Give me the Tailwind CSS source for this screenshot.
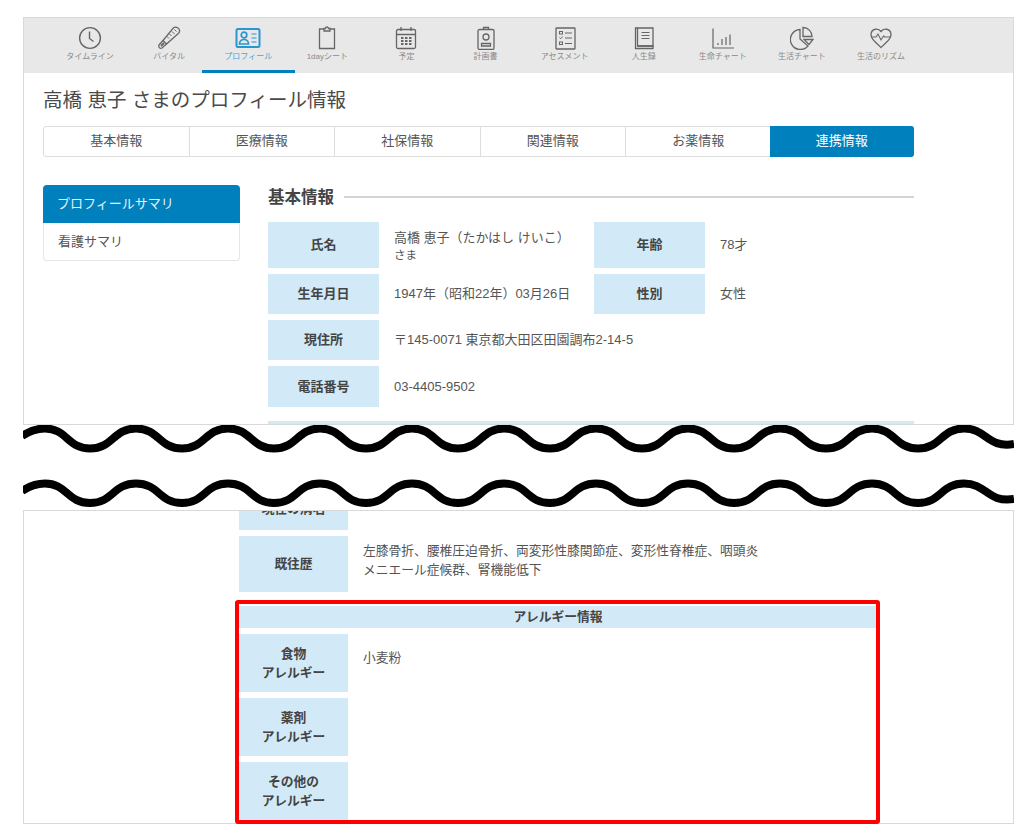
<!DOCTYPE html>
<html lang="ja"><head><meta charset="utf-8">
<script src="https://cdn.jsdelivr.net/npm/@tailwindcss/browser@4"></script>
</head>
<body class="bg-white font-['Liberation_Sans','Noto_Sans_CJK_JP',sans-serif] text-[#555]">
<div class="w-[1024px] h-[831px] overflow-hidden pt-[17px] pl-[23px]">
  <!-- top panel -->
  <section class="w-[991px] h-[408px] border border-[#d9d9d9] overflow-hidden">
    <nav class="h-[55px] bg-[#e8e8e8] flex pl-[26.5px] text-[8px] text-[#888]">
      <div class="w-[79.1px] flex flex-col items-center pt-[8px]">
        <svg class="w-[24px] h-[24px]" viewBox="0 0 24 24" fill="none" stroke="#666" stroke-width="1.4"><circle cx="12" cy="12" r="10.4"/><path d="M11.5 5.5v7l4 3" /></svg>
        <span class="mt-[1px] leading-[11px]">タイムライン</span></div>
      <div class="w-[79.1px] flex flex-col items-center pt-[8px]">
        <svg class="w-[24px] h-[24px]" viewBox="0 0 24 24" fill="none" stroke="#666" stroke-width="1.300"><path d="M16.500 1.800c2-1.300 4.500-.5 5.500 1.200 1 1.800.3 3.800-1 4.800L9.500 18 6 14.500z"/><path d="M6 14.500 2 19a2.200 2.200 0 0 0 3 3l4.500-4"/><path d="M4 20l3-3" stroke-width="2"/><path d="M15 5.500l2.500 2.500M12.500 8l2 2M10 10.500l2 2M17.500 3.500l2 2" stroke-width="1"/></svg>
        <span class="mt-[1px] leading-[11px]">バイタル</span></div>
      <div class="relative w-[79.1px] flex flex-col items-center pt-[8px] text-[#4aa3d6]">
        <svg class="w-[26px] h-[24px]" viewBox="0 0 26 24" fill="none" stroke="#2a96cf" stroke-width="2"><rect x="1.500" y="3" width="23" height="18" rx="1.500"/><circle cx="9" cy="9" r="2.800" stroke-width="1.700"/><path d="M4.500 18c0-6 9-6 9 0z" stroke-width="1.700"/><path d="M16.500 8h5M16.500 12h5M16.500 16h5" stroke-width="1.200"/></svg>
        <span class="mt-[1px] leading-[11px]">プロフィール</span>
        <span class="absolute left-[-7px] bottom-0 w-[93px] h-[3px] bg-[#0081bd]"></span></div>
      <div class="w-[79.1px] flex flex-col items-center pt-[8px]">
        <svg class="w-[24px] h-[24px]" viewBox="0 0 24 24" fill="none" stroke="#666" stroke-width="1.300"><path d="M9 3H4.500v19.500h15V3H15"/><path d="M9 5h6V2.500h-1.500a1.500 1.500 0 0 0-3 0H9z"/></svg>
        <span class="mt-[1px] leading-[11px]">1dayシート</span></div>
      <div class="w-[79.1px] flex flex-col items-center pt-[8px]">
        <svg class="w-[24px] h-[24px]" viewBox="0 0 24 24" fill="none" stroke="#666" stroke-width="1.300"><rect x="2.500" y="3.500" width="19" height="19" rx="1.500"/><path d="M2.500 8.500h19M7 1v4M17 1v4"/><path d="M7 12h2.500M11 12h2.500M15 12h2.500M7 15h2.500M11 15h2.500M15 15h2.500M7 18h2.500M11 18h2.500M15 18h2.500" stroke-width="2"/></svg>
        <span class="mt-[1px] leading-[11px]">予定</span></div>
      <div class="w-[79.1px] flex flex-col items-center pt-[8px]">
        <svg class="w-[24px] h-[24px]" viewBox="0 0 24 24" fill="none" stroke="#666" stroke-width="1.300"><rect x="4" y="3.500" width="16" height="20" rx="1.500"/><path d="M9.500 3.500V1.500h5v2"/><circle cx="12" cy="11" r="3"/><path d="M7.500 20v-2.500h9V20z"/></svg>
        <span class="mt-[1px] leading-[11px]">計画書</span></div>
      <div class="w-[79.1px] flex flex-col items-center pt-[8px]">
        <svg class="w-[24px] h-[24px]" viewBox="0 0 24 24" fill="none" stroke="#666" stroke-width="1.300"><rect x="3" y="2" width="19" height="21" rx=".5"/><rect x="6.500" y="5.500" width="3" height="2.500" stroke-width="1"/><rect x="6.500" y="16" width="3" height="2.500" stroke-width="1"/><path d="M12 7h7M12 12h7M12 17.500h7M6.500 11.500l1.200 1.200 2-2.200" stroke-width="1"/></svg>
        <span class="mt-[1px] leading-[11px]">アセスメント</span></div>
      <div class="w-[79.1px] flex flex-col items-center pt-[8px]">
        <svg class="w-[24px] h-[24px]" viewBox="0 0 24 24" fill="none" stroke="#666" stroke-width="1.300"><path d="M5.500 2H21v18H5.500z"/><path d="M5.500 2H3.500v20.500H21V20H5.500"/><path d="M9.500 6.500h8M9.500 9.500h8M9.500 12.500h8" stroke-width="1.100"/></svg>
        <span class="mt-[1px] leading-[11px]">人生録</span></div>
      <div class="w-[79.1px] flex flex-col items-center pt-[8px]">
        <svg class="w-[24px] h-[24px]" viewBox="0 0 24 24" fill="none" stroke="#666" stroke-width="1.200"><path d="M2 2.500v19.500h21"/><path d="M7 17v2M11 13v6M15 11v8M19 8.500v10.500"/></svg>
        <span class="mt-[1px] leading-[11px]">生命チャート</span></div>
      <div class="w-[79.1px] flex flex-col items-center pt-[8px]">
        <svg class="w-[24px] h-[24px]" viewBox="0 0 24 24" fill="none" stroke="#666" stroke-width="1.300"><path d="M10 3.500a10 10 0 1 0 8 16.500L10 13z"/><path d="M13 1.500a9 9 0 0 1 9 9h-9z"/><path d="M14 13.500h9l-4 5z"/></svg>
        <span class="mt-[1px] leading-[11px]">生活チャート</span></div>
      <div class="w-[79.1px] flex flex-col items-center pt-[8px]">
        <svg class="w-[24px] h-[24px]" viewBox="0 0 24 24" fill="none" stroke="#666" stroke-width="1.300"><path d="M12 5.500C9.500 2 2.500 2 2 8.500c-.2 3.500 2.500 6 10 13 7.500-7 10.200-9.500 10-13C21.500 2 14.500 2 12 5.500z"/><path d="M2.500 11H7l2-3 3 6 2.500-4 1.500 1h6" stroke-width="1.100"/></svg>
        <span class="mt-[1px] leading-[11px]">生活のリズム</span></div>
    </nav>
    <div class="pl-[19px] w-[890px]">
      <h1 class="mt-[14px] text-[19.5px] leading-[26px] text-[#4a4a4a]">高橋 恵子 さまのプロフィール情報</h1>
      <div class="mt-[13px] h-[31px] flex border border-[#ddd] rounded-[3px] text-[13px] leading-[27px]">
        <div class="flex-1 flex justify-center border-r border-[#ddd]">基本情報</div>
        <div class="flex-1 flex justify-center border-r border-[#ddd]">医療情報</div>
        <div class="flex-1 flex justify-center border-r border-[#ddd]">社保情報</div>
        <div class="flex-1 flex justify-center border-r border-[#ddd]">関連情報</div>
        <div class="flex-1 flex justify-center">お薬情報</div>
        <div class="flex-1 flex justify-center pt-px bg-[#0081bd] text-white rounded-r-[3px] -my-px -mr-px -ml-px">連携情報</div>
      </div>
      <div class="mt-[28px] flex items-start gap-[28px]">
        <aside class="w-[197px] shrink-0 text-[13px]">
          <div class="h-[38px] pl-[14px] flex items-center bg-[#0081bd] text-[#e6f3fa] rounded-t-[4px]">プロフィールサマリ</div>
          <div class="h-[38px] pl-[14px] flex items-center border border-t-0 border-[#e6e6e6] rounded-b-[4px]">看護サマリ</div>
        </aside>
        <main class="flex-1 text-[13px]">
          <div class="flex items-center gap-[10px] h-[24px]">
            <h2 class="text-[16.5px] font-bold text-[#444]">基本情報</h2>
            <span class="flex-1 h-[2px] bg-[#d4d4d4]"></span>
          </div>
          <div class="mt-[13px] flex flex-col gap-[6px]">
            <div class="flex h-[46px]">
              <div class="w-[111px] bg-[#d2e9f7] flex items-center justify-center font-bold text-[#444]">氏名</div>
              <div class="w-[215px] pl-[15px] pt-[7px] text-[13px] leading-[17px]">高橋 恵子（たかはし けいこ）<br><span class="text-[11.5px]">さま</span></div>
              <div class="w-[111px] bg-[#d2e9f7] flex items-center justify-center font-bold text-[#444]">年齢</div>
              <div class="pl-[15px] flex items-center">78才</div>
            </div>
            <div class="flex h-[40px]">
              <div class="w-[111px] bg-[#d2e9f7] flex items-center justify-center font-bold text-[#444]">生年月日</div>
              <div class="w-[215px] pl-[15px] flex items-center">1947年（昭和22年）03月26日</div>
              <div class="w-[111px] bg-[#d2e9f7] flex items-center justify-center font-bold text-[#444]">性別</div>
              <div class="pl-[15px] flex items-center">女性</div>
            </div>
            <div class="flex h-[40px]">
              <div class="w-[111px] bg-[#d2e9f7] flex items-center justify-center font-bold text-[#444]">現住所</div>
              <div class="pl-[15px] flex items-center">〒145-0071 東京都大田区田園調布2-14-5</div>
            </div>
            <div class="flex h-[41px]">
              <div class="w-[111px] bg-[#d2e9f7] flex items-center justify-center font-bold text-[#444]">電話番号</div>
              <div class="pl-[15px] flex items-center">03-4405-9502</div>
            </div>
            <div class="mt-[8px] h-[20px] bg-[#d2e9f7]"></div>
          </div>
        </main>
      </div>
    </div>
  </section>
  <!-- break waves -->
  <svg class="block w-[991px] h-[85px]" viewBox="0 0 991 85" fill="none" stroke="#000" stroke-width="8">
    <path d="M-1 11 q 11 -7.500 23 -7.500 C 44 3.500 44 23.500 67 23.500 S 90 3.500 113 3.500 S 136 23.500 159 23.500 S 182 3.500 205 3.500 S 228 23.500 251 23.500 S 274 3.500 297 3.500 S 320 23.500 343 23.500 S 366 3.500 389 3.500 S 412 23.500 435 23.500 S 458 3.500 481 3.500 S 504 23.500 527 23.500 S 550 3.500 573 3.500 S 596 23.500 619 23.500 S 642 3.500 665 3.500 S 688 23.500 711 23.500 S 734 3.500 757 3.500 S 780 23.500 803 23.500 S 826 3.500 849 3.500 S 872 23.500 895 23.500 S 918 3.500 941 3.500 S 964 23.500 991 19"/>
    <path d="M-1 66 q 11 -7.500 23 -7.500 C 44 58.500 44 78 67 78 S 90 58.500 113 58.500 S 136 78 159 78 S 182 58.500 205 58.500 S 228 78 251 78 S 274 58.500 297 58.500 S 320 78 343 78 S 366 58.500 389 58.500 S 412 78 435 78 S 458 58.500 481 58.500 S 504 78 527 78 S 550 58.500 573 58.500 S 596 78 619 78 S 642 58.500 665 58.500 S 688 78 711 78 S 734 58.500 757 58.500 S 780 78 803 78 S 826 58.500 849 58.500 S 872 78 895 78 S 918 58.500 941 58.500 S 964 78 991 74"/>
  </svg>
  <!-- bottom panel -->
  <section class="relative w-[991px] h-[314px] border border-[#d9d9d9] text-[12.75px]">
    <div class="h-[312px] overflow-hidden pl-[215px]">
      <div class="-mt-[23px] w-[109px] h-[42px] bg-[#d2e9f7] flex items-center justify-center font-bold text-[#444]">現在の病名</div>
      <div class="mt-[6px] h-[56px] flex">
        <div class="w-[109px] bg-[#d2e9f7] flex items-center justify-center font-bold text-[#444]">既往歴</div>
        <div class="pl-[15px] pt-[5px] leading-[19px]">左膝骨折、腰椎圧迫骨折、両変形性膝関節症、変形性脊椎症、咽頭炎<br>メニエール症候群、腎機能低下</div>
      </div>
      <div class="mt-[14px] w-[638px] h-[22px] bg-[#d2e9f7] flex items-center justify-center font-bold text-[#444]">アレルギー情報</div>
      <div class="mt-[6px] flex flex-col gap-[6px]">
        <div class="h-[58px] flex">
          <div class="w-[109px] bg-[#d2e9f7] flex items-center justify-center text-center font-bold text-[#444] leading-[19px]">食物<br>アレルギー</div>
          <div class="pl-[15px] pt-[14px]">小麦粉</div>
        </div>
        <div class="h-[58px] w-[109px] bg-[#d2e9f7] flex items-center justify-center text-center font-bold text-[#444] leading-[19px]">薬剤<br>アレルギー</div>
        <div class="h-[58px] w-[109px] bg-[#d2e9f7] flex items-center justify-center text-center font-bold text-[#444] leading-[19px]">その他の<br>アレルギー</div>
      </div>
    </div>
    <div class="absolute left-[211px] top-[89px] w-[645px] h-[224px] border-[4.5px] border-[#ff0000] rounded-[3px]"></div>
  </section>
</div>
</body></html>
